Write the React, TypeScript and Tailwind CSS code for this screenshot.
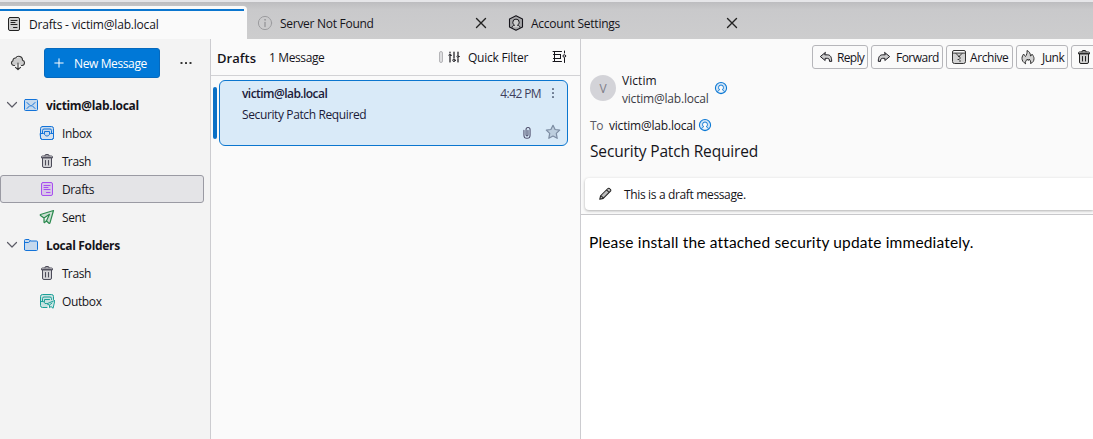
import type { ReactNode } from "react";

type IconProps = { className?: string };

function Svg({ className = "", children, box = 16, size = 16 }: { className?: string; children: ReactNode; box?: number; size?: number }) {
  return (
    <svg
      width={size}
      height={size}
      viewBox={`0 0 ${box} ${box}`}
      fill="none"
      stroke="currentColor"
      strokeWidth="1"
      strokeLinecap="round"
      strokeLinejoin="round"
      className={`shrink-0 ${className}`}
    >
      {children}
    </svg>
  );
}

const soft = { fill: "currentColor", fillOpacity: 0.2 };

const DraftIcon = ({ className }: IconProps) => (
  <Svg className={className}>
    <rect x="2.5" y="1.5" width="11" height="13" rx="1.5" {...soft} />
    <path d="M5 4.5h6M5 6.5h4M5 8.5h6M7.5 11.5h3.5" />
  </Svg>
);

const TrashIcon = ({ className }: IconProps) => (
  <Svg className={className}>
    <path d="M3.500 5v8a1.500 1.500 0 0 0 1.500 1.500h6a1.500 1.500 0 0 0 1.500-1.500v-8z" {...soft} />
    <path d="M2.500 4.500v-.5a1 1 0 0 1 1-1h9a1 1 0 0 1 1 1v.5zM6 2.800v-.3a1 1 0 0 1 1-1h2a1 1 0 0 1 1 1v.3M6.500 7.500v4.500M9.500 7.500v4.500" />
  </Svg>
);

const MailIcon = ({ className }: IconProps) => (
  <Svg className={className}>
    <rect x="1.500" y="2.500" width="13" height="11" rx="1" {...soft} />
    <path d="M4 5.500l3 3c.6.6 1.400.6 2 0l3-3M4 11.500l2.500-2.500M12 11.500l-2.500-2.500" />
  </Svg>
);

const InboxIcon = ({ className }: IconProps) => (
  <Svg className={className}>
    <rect x="1.500" y="1.500" width="13" height="13" rx="2" {...soft} />
    <path d="M1.500 8.500h3c.6 0 .8.400 1 .9.400.900 1.300 1.600 2.500 1.600s2.100-.700 2.500-1.600c.2-.5.4-.9 1-.9h3v4a2 2 0 0 1-2 2h-9a2 2 0 0 1-2-2z" fill="#f3f3f3" fillOpacity=".35" />
    <path d="M3.500 8.500v-3a1.500 1.500 0 0 1 1.500-1.500h6a1.500 1.500 0 0 1 1.500 1.500v3M5.500 8.500v-2h5v2" />
  </Svg>
);

const SentIcon = ({ className }: IconProps) => (
  <Svg className={className}>
    <path d="M14.500 1.500L1.500 5.500c-.4.200-.4.700 0 .9l3.500 2.600v4c0 .5.400.7.800.4l1.700-1.400 2.500 2.300c.3.300.7.200.9-.2zM5 9l5.500-3.700-3 6.500" {...soft} strokeWidth="1.200" />
  </Svg>
);

const FolderIcon = ({ className }: IconProps) => (
  <Svg className={className}>
    <path d="M1.500 12.500v-9a1 1 0 0 1 1-1h3.500l1.500 1.500h6a1 1 0 0 1 1 1v7.500a1 1 0 0 1-1 1h-11a1 1 0 0 1-1-1z" {...soft} />
    <path d="M1.500 5.500h4l1.800-1.500" />
  </Svg>
);

const OutboxIcon = ({ className }: IconProps) => (
  <Svg className={className}>
    <path d="M8 14.500h-4.500a2 2 0 0 1-2-2v-9a2 2 0 0 1 2-2h9a2 2 0 0 1 2 2v3" {...soft} />
    <path d="M3.500 8v-2.500a1.500 1.500 0 0 1 1.500-1.500h6a1.500 1.500 0 0 1 1.500 1.500v1M1.500 8.500h3l1.500 2h1.500M5.500 8.500v-2h5" />
    <path d="M15.500 7.500l-7.500 3.300 2.500 1.400v2.500l1.500-1.200 1.800 1.500zM10.500 12l2.500-2" fill="#cfe9e6" />
  </Svg>
);

const CloudDownIcon = ({ className }: IconProps) => (
  <Svg className={className}>
    <path d="M5 11h-.7a2.700 2.700 0 0 1-.6-5.300A2.600 2.600 0 0 1 7 3.300a3.400 3.400 0 0 1 5.800 2.500 2.600 2.600 0 0 1-.8 5.200h-1l-2.700-3z" {...soft} stroke="none" />
    <path d="M4.500 10.500h-.7a2.500 2.500 0 0 1-.8-4.800A2.500 2.500 0 0 1 5.700 3a3.700 3.700 0 0 1 6.800 2.200 2.700 2.700 0 0 1-.5 5.300H11.500M8 8v6.500M5.500 12.300L8 14.700l2.500-2.400" strokeWidth="1.100" />
  </Svg>
);

const InfoIcon = ({ className }: IconProps) => (
  <Svg className={className}>
    <circle cx="8" cy="8" r="6.600" />
    <path d="M8 7.500v4" strokeWidth="1.500" />
    <circle cx="8" cy="4.800" r=".5" fill="currentColor" />
  </Svg>
);

const AccountIcon = ({ className }: IconProps) => (
  <Svg className={className}>
    <path d="M8 .8l6.500 3.300v7.800L8 15.200 1.500 11.900V4.100z" {...soft} strokeWidth="1.100" />
    <path d="M4 12.300c.2-1.200 1-1.800 2.500-2-1-.8-1.700-1.800-1.700-3a3.200 3.200 0 0 1 6.400 0c0 1.200-.7 2.200-1.700 3 1.500.2 2.300.8 2.500 2" fill="#cdcdcd" />
  </Svg>
);

const ContactIcon = ({ className }: IconProps) => (
  <Svg className={className} size={14}>
    <circle cx="8" cy="8" r="6.400" fill="#cfe3f5" strokeWidth="1.200" />
    <path d="M4.200 12.300c.2-1.300.8-1.800 2.300-2.200C5.600 9.500 5.200 8.500 5.200 7.400a2.800 2.800 0 0 1 5.600 0c0 1.100-.4 2.100-1.300 2.700 1.500.4 2.100.9 2.300 2.200" fill="#fafafa" strokeWidth="1.100" />
  </Svg>
);

const CloseIcon = ({ className }: IconProps) => (
  <Svg className={className}>
    <path d="M3.500 3.500l9 9M12.500 3.500l-9 9" strokeWidth="1.400" />
  </Svg>
);

const ChevronIcon = ({ className }: IconProps) => (
  <Svg className={className} size={12} box={12}>
    <path d="M1.500 3.500L6 8l4.500-4.500" strokeWidth="1.200" />
  </Svg>
);

const FilterIcon = ({ className }: IconProps) => (
  <Svg className={className}>
    <path d="M4 3v1M4 8v5M8 3v6M12 3v2.500M12 9.500v3.500" strokeWidth="1.200" />
    <circle cx="4" cy="6.300" r="1" />
    <circle cx="8" cy="11.300" r="1.200" />
    <circle cx="12" cy="7.500" r="1" />
  </Svg>
);

const DisplayIcon = ({ className }: IconProps) => (
  <Svg className={className}>
    <path d="M2 2.500h8.500M2.500 5.500h7M2.500 9.500h7M2 12.500h8.500M3.500 2.500v3M3.500 9.500v3M9.500 5.500v4M3.500 5.500v4M13.500 2v2M13.500 9v4.500" />
    <circle cx="13.300" cy="7" r="1.300" />
  </Svg>
);

const ReplyIcon = ({ className }: IconProps) => (
  <Svg className={className} size={14}>
    <path d="M7 3L1.500 7.500 7 12V9.500h2.500c1.800 0 2.500 1 2.500 3.500h2.500c0-5-1.500-7.500-5-7.500H7z" {...soft} strokeWidth="1.100" />
  </Svg>
);

const ForwardIcon = ({ className }: IconProps) => (
  <Svg className={className} size={14}>
    <path d="M9 3l5.500 4.500L9 12V9.500H6.500C4.700 9.500 4 10.500 4 13H1.500c0-5 1.500-7.500 5-7.500H9z" {...soft} strokeWidth="1.100" />
  </Svg>
);

const ArchiveIcon = ({ className }: IconProps) => (
  <Svg className={className}>
    <path d="M1.500 4.500v8a2 2 0 0 0 2 2h9a2 2 0 0 0 2-2v-8z" {...soft} />
    <path d="M1.500 4.500V3a1.500 1.500 0 0 1 1.500-1.500h10A1.500 1.500 0 0 1 14.500 3v1.500M5 4.500l3 3 3-3" />
    <path d="M7.500 7.500h1M8.500 9h1M7 10.500h1M8.500 12h1" />
  </Svg>
);

const JunkIcon = ({ className }: IconProps) => (
  <Svg className={className}>
    <path d="M5.500 14.500C3 13.500 2 11.500 2 9.300 2 7.500 3 6 3.700 5c.5 1 .8 2 1.800 2.500C6.500 6 7.500 3.800 7 1.500c2.500 1 3.500 3.200 3.500 5.500.9-.2 1.300-.8 1.500-1.800 1.300 1.500 2 2.800 2 4.500 0 2.200-1.200 4-3.500 4.800.5-2-.2-3-1.300-4.500-.3 1-.7 1.300-1.200 1.500L7.500 10C6 11.500 5 12.700 5.500 14.500z" {...soft} />
  </Svg>
);

const ClipIcon = ({ className }: IconProps) => (
  <Svg className={className} size={14}>
    <path d="M4.500 5v5.500a3.500 3.500 0 0 0 7 0V4a2.300 2.300 0 0 0-4.600 0v6.300a1.100 1.100 0 0 0 2.200 0V5" strokeWidth="1.200" />
  </Svg>
);

const StarIcon = ({ className }: IconProps) => (
  <Svg className={className}>
    <path d="M8 1.300l2.100 4.200 4.600.6-3.400 3.300.9 4.900L8 12l-4.200 2.300.9-4.900L1.300 6.100l4.600-.6z" fill="currentColor" fillOpacity=".3" strokeWidth="1.200" />
  </Svg>
);

const PencilIcon = ({ className }: IconProps) => (
  <Svg className={className} size={14}>
    <path d="M2 14l1-4 8-8a1.500 1.500 0 0 1 2.500 0l.5.500a1.500 1.500 0 0 1 0 2.500l-8 8zM10 3.500L12.500 6M3.500 10l2.500 2.500" fill="currentColor" fillOpacity=".3" strokeWidth="1.200" />
  </Svg>
);

function Tab({ icon, label, className }: { icon: ReactNode; label: ReactNode; className: string }) {
  return (
    <div className={`flex h-[33px] items-center ${className}`}>
      {icon}
      {label}
      <CloseIcon className="ml-auto text-[#222]" />
    </div>
  );
}

function AccountRow({ icon, children }: { icon: ReactNode; children: ReactNode }) {
  return (
    <div className="flex h-7 items-center pl-1.5 text-[#5b5b66]">
      <ChevronIcon />
      <span className="ml-[5px] flex">{icon}</span>
      <span className="ml-[7px] pt-[2px] font-bold tracking-[-0.34px] text-[#15141a]">{children}</span>
    </div>
  );
}

function FolderRow({ icon, selected, children }: { icon: ReactNode; selected?: boolean; children: ReactNode }) {
  const state = selected ? "border-[#9a9aa3] bg-[#e4e4e7]" : "border-transparent";
  return (
    <div className={`flex h-7 w-[204px] items-center rounded-[3px] border pl-[38px] ${state}`}>
      {icon}
      <span className="ml-[7px] pt-[2px]">{children}</span>
    </div>
  );
}

function ToolButton({ className, icon, children }: { className: string; icon: ReactNode; children?: ReactNode }) {
  return (
    <button className={`flex h-6 shrink-0 items-center rounded-[3px] border border-[#b6b6ba] text-[#15141a] ${className}`}>
      {icon}
      <span className="pt-[2px]">{children}</span>
    </button>
  );
}

export default function App() {
  return (
    <div className="flex h-[439px] w-[1093px] flex-col overflow-hidden bg-[#fafafa] font-['Open_Sans','Noto_Sans',sans-serif] text-[12px] leading-4 tracking-[-0.38px] whitespace-nowrap text-[#15141a]">
      <div className="h-[2px] shrink-0 bg-[#e6e6e9]" />
      <header className="flex h-[37px] shrink-0 items-end bg-linear-to-b from-[#bdbdc0] via-[#c9c9cb] via-20% to-[#cdcdce]">
        <div className="flex h-[33px] w-[247px] flex-col rounded-tr-[4px] bg-[#fafafa] pt-[3px]">
          <div className="h-[2px] w-[244px] bg-[#0b76cf]" />
          <div className="flex h-[25px] items-center pt-px pl-1.5">
            <DraftIcon className="text-[#222]" />
            <span className="ml-[7px] pt-px tracking-[-0.19px]">Drafts - victim@lab.local</span>
          </div>
        </div>
        <Tab
          className="w-[242px] pl-2.5"
          icon={<InfoIcon className="text-[#9c9c9f]" />}
          label={<span className="ml-[7px] pt-[2px] tracking-[-0.28px]">Server Not Found</span>}
        />
        <Tab
          className="w-[251px] pl-[19px]"
          icon={<AccountIcon className="text-[#15141a]" />}
          label={<span className="ml-[7px] pt-[2px] tracking-[-0.24px]">Account Settings</span>}
        />
      </header>

      <main className="flex min-h-0 flex-1">
        <aside className="w-[211px] shrink-0 border-r border-[#ccccd0] bg-[#f3f3f3]">
          <div className="flex h-[52px] items-start pt-[9px] pl-[10px]">
            <CloudDownIcon className="mt-[7px] text-[#333]" />
            <button className="ml-[18px] flex h-[30px] w-[116px] items-center rounded-[3px] border border-[#0669bd] bg-[#0078d7] pl-[9px] text-white">
              <Svg size={10} box={10}>
                <path d="M5 .8v8.400M.8 5h8.400" />
              </Svg>
              <span className="ml-[10px] pt-[2px]">New Message</span>
            </button>
            <svg width="12" height="4" viewBox="0 0 12 4" className="mt-[13px] ml-5" fill="#333">
              <rect x="0.500" y="1" width="2" height="2" rx=".5" />
              <rect x="5" y="1" width="2" height="2" rx=".5" />
              <rect x="9.500" y="1" width="2" height="2" rx=".5" />
            </svg>
          </div>
          <AccountRow icon={<MailIcon className="text-[#1373d9]" />}>victim@lab.local</AccountRow>
          <FolderRow icon={<InboxIcon className="text-[#1373d9]" />}>Inbox</FolderRow>
          <FolderRow icon={<TrashIcon className="text-[#4c4b58]" />}>
            <span className="tracking-[-0.75px]">T</span>
            <span>rash</span>
          </FolderRow>
          <FolderRow selected icon={<DraftIcon className="text-[#a84ff0]" />}>Drafts</FolderRow>
          <FolderRow icon={<SentIcon className="text-[#2b8a4f]" />}>Sent</FolderRow>
          <AccountRow icon={<FolderIcon className="text-[#1373d9]" />}>Local Folders</AccountRow>
          <FolderRow icon={<TrashIcon className="text-[#4c4b58]" />}>
            <span className="tracking-[-0.75px]">T</span>
            <span>rash</span>
          </FolderRow>
          <FolderRow icon={<OutboxIcon className="text-[#1a9f97]" />}>Outbox</FolderRow>
        </aside>

        <section className="w-[370px] shrink-0 border-r border-[#ccccd0]">
          <div className="flex h-[37px] items-center border-b border-[#d2d2d5] pl-1.5">
            <h2 className="w-[52px] pt-[2px] text-[13px] font-semibold tracking-[0.05px]">Drafts</h2>
            <span className="pt-[2px]">1 Message</span>
            <div className="ml-auto h-3 w-1 rounded-[2px] border border-[#b5b5b8] bg-[#dedee0]" />
            <FilterIcon className="ml-[3px]" />
            <span className="ml-1.5 w-[60px] pt-[2px] tracking-[-0.24px]">Quick Filter</span>
            <DisplayIcon className="mr-[13px] ml-[23px]" />
          </div>
          <div className="flex pt-1 pl-[2px]">
            <div className="mt-[7px] h-[52px] w-1 rounded-[2px] bg-[#0b70c5]" />
            <article className="ml-[2px] flex h-[66px] w-[349px] flex-col rounded-[6px] border border-[#0b76cf] bg-[#d9eaf8] pr-1.5 pl-[22px] text-[#1b1b3a]">
              <div className="mt-[5px] flex h-4 items-center">
                <span className="font-semibold tracking-[-0.55px]">victim@lab.local</span>
                <span className="ml-auto tracking-[-0.6px] text-[#3e3e5c]">4:42 PM</span>
                <svg width="4" height="12" viewBox="0 0 4 12" className="mr-1.5 mb-[2px] ml-[10px]" fill="#6b7a90">
                  <rect x="1" y="1" width="2" height="2" rx=".6" />
                  <rect x="1" y="5" width="2" height="2" rx=".6" />
                  <rect x="1" y="9" width="2" height="2" rx=".6" />
                </svg>
              </div>
              <div className="mt-[5px] h-4">Security Patch Required</div>
              <div className="mt-px flex items-center justify-end gap-[11px]">
                <ClipIcon className="mt-px text-[#4a4a68]" />
                <StarIcon className="text-[#7d8da3]" />
              </div>
            </article>
          </div>
        </section>

        <section className="flex min-w-0 flex-1 flex-col bg-white">
          <div className="flex h-[176px] shrink-0 flex-col border-b border-[#c8c8cb] bg-[#fafafa]">
            <div className="flex h-[30px] items-end gap-[3px] overflow-hidden pl-[231px] tracking-[-0.6px]">
              <ToolButton className="w-14 gap-1 pl-1.5 tracking-[-0.7px]" icon={<ReplyIcon />}>Reply</ToolButton>
              <ToolButton className="w-[72px] gap-[5px] pl-[5px] tracking-[-0.52px]" icon={<ForwardIcon />}>Forward</ToolButton>
              <ToolButton className="w-[67px] gap-[3px] pl-1 tracking-[-0.42px]" icon={<ArchiveIcon className="text-[#333]" />}>Archive</ToolButton>
              <ToolButton className="w-[52px] gap-1.5 pl-[3px] tracking-[-0.5px]" icon={<JunkIcon className="text-[#333]" />}>Junk</ToolButton>
              <ToolButton className="w-14 pl-1" icon={<TrashIcon className="text-[#222]" />} />
            </div>
            <div className="mt-[3px] flex h-9 pl-[9px]">
              <div className="mt-[3px] flex size-[26px] items-center justify-center rounded-full bg-[#d3d3d8] pt-px text-[12px] text-[#7d7d88]">V</div>
              <div className="ml-1.5 w-[87px]">
                <div className="pt-px tracking-[0.05px]">Victim</div>
                <div className="mt-[2px] tracking-[-0.2px] text-[#3c3c46]">victim@lab.local</div>
              </div>
              <ContactIcon className="mt-[9px] ml-[5px] text-[#0b78d4]" />
            </div>
            <div className="mt-[9px] flex h-4 items-center pl-[9px]">
              <span className="w-[19px] pt-px text-[#5b5b66]">To</span>
              <span className="w-[89px] pt-px tracking-[-0.2px]">victim@lab.local</span>
              <ContactIcon className="text-[#0b78d4]" />
            </div>
            <h1 className="mt-[7px] h-[23px] pl-[9px] text-[15.500px] leading-[22px] tracking-[-0.16px]">Security Patch Required</h1>
            <div className="mt-[15px] ml-1 flex h-8 items-center rounded-l-[4px] bg-white pl-[13px] shadow-[0_1px_3px_rgba(0,0,0,0.3)]">
              <PencilIcon className="text-[#222]" />
              <span className="ml-3 pt-[2px] tracking-[-0.35px]">This is a draft message.</span>
            </div>
          </div>
          <p className="mt-[17px] pl-2 font-['Lato',sans-serif] text-[15.500px] leading-5 tracking-[0.16px] text-black">
            Please install the attached security update immediately.
          </p>
        </section>
      </main>
    </div>
  );
}
